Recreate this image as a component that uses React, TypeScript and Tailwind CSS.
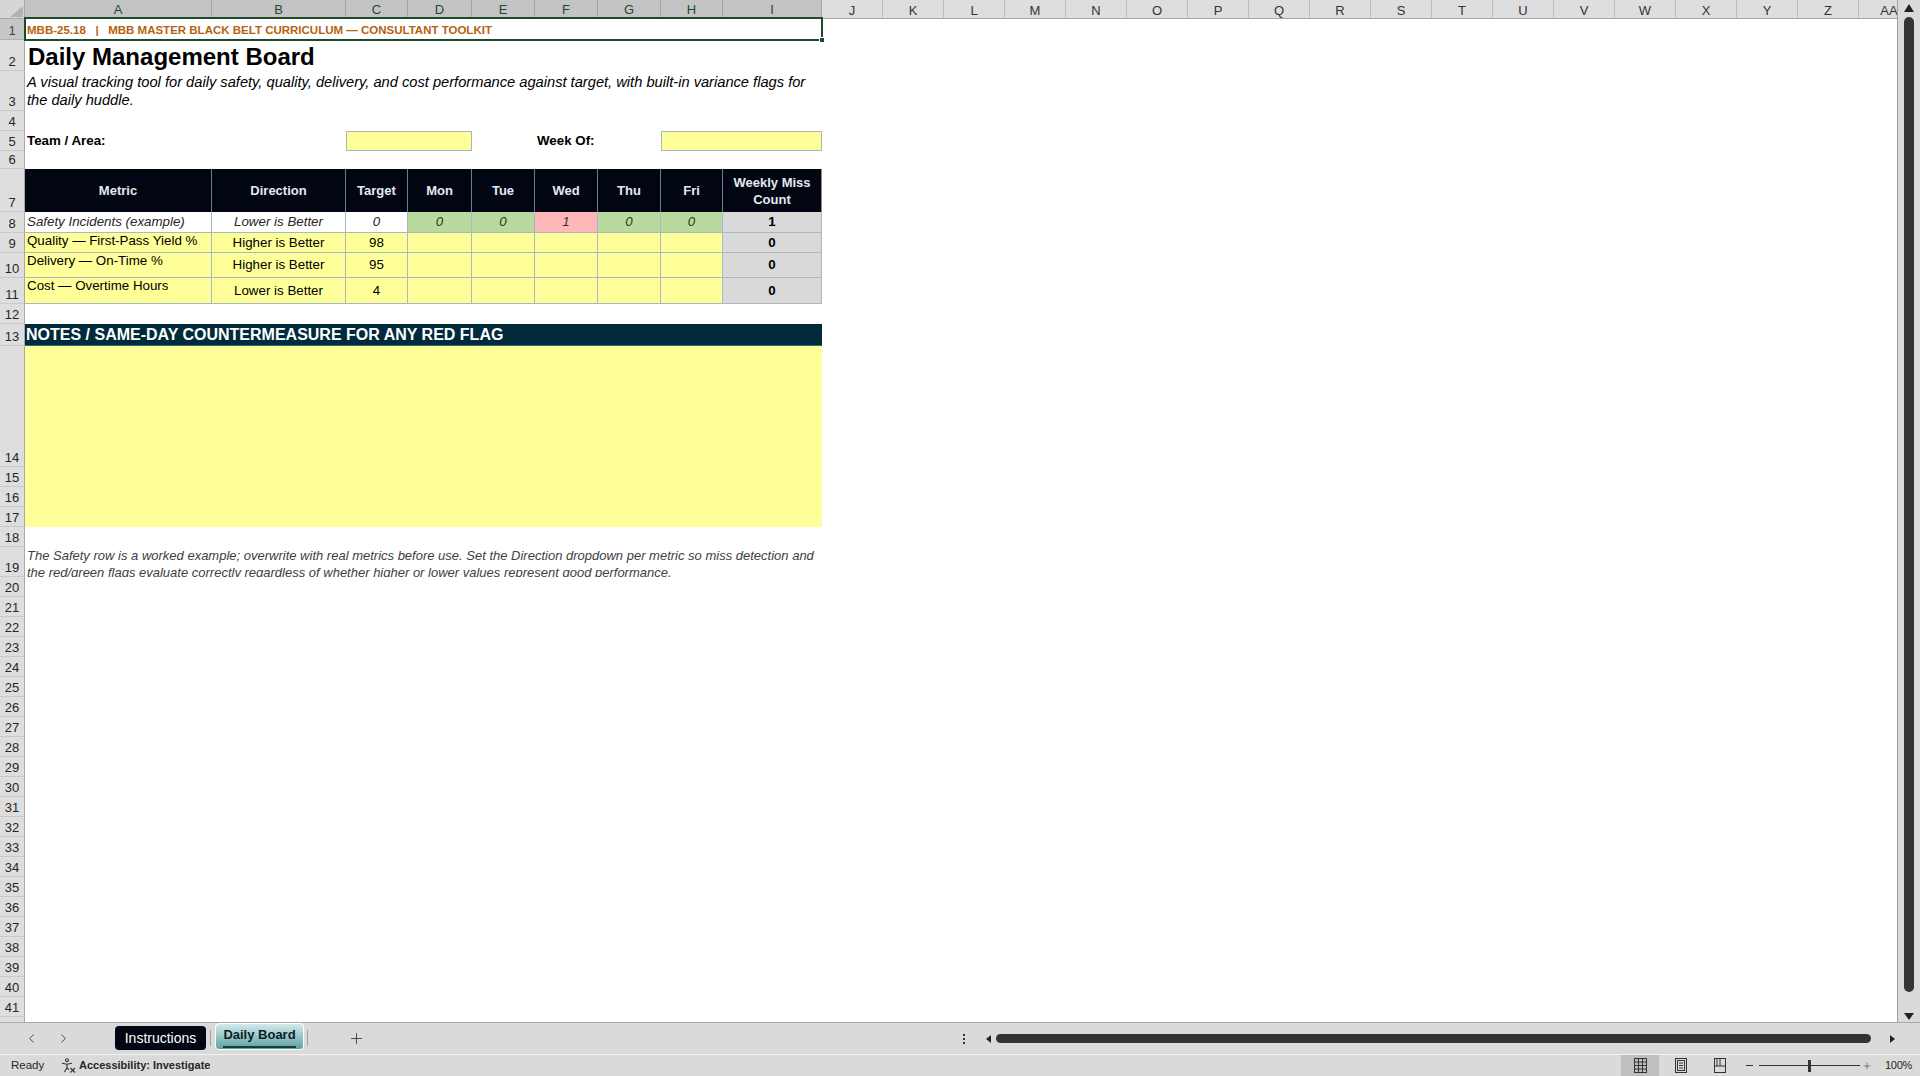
import React from "react";
import { ChevronLeft, ChevronRight, Plus } from "lucide-react";

const FONT = "font-['Liberation_Sans',Arial,sans-serif]";
const TB = "border-r border-b border-[#a7b9c4]";

function RowHead({ n, sel, h = "" }: { n: number; sel?: boolean; h?: string }) {
  return (
    <div
      className={`w-[25px] shrink-0 ${h} flex items-end justify-center pb-[1px] border-r border-b text-[13px] leading-[15px] ${
        sel
          ? "bg-[#c6c6c6] text-[#1e5631] border-r-[#1e4a2c] border-b-[#b0b0b0]"
          : "bg-[#dedede] text-[#262626] border-r-[#a8a8a8] border-b-[#c9c9c9]"
      }`}
    >
      {n}
    </div>
  );
}

function Row({ n, h, sel, children }: { n: number; h: string; sel?: boolean; children?: React.ReactNode }) {
  return (
    <div className={`flex shrink-0 ${h}`}>
      <RowHead n={n} sel={sel} />
      <div className="w-[797px] shrink-0 flex relative">{children}</div>
      <div className="flex-1 bg-white" />
    </div>
  );
}

const selCols: [string, string][] = [
  ["A", "w-[187px]"],
  ["B", "w-[134px]"],
  ["C", "w-[62px]"],
  ["D", "w-[64px]"],
  ["E", "w-[63px]"],
  ["F", "w-[63px]"],
  ["G", "w-[63px]"],
  ["H", "w-[62px]"],
  ["I", "w-[99px]"],
];
const restCols = ["J", "K", "L", "M", "N", "O", "P", "Q", "R", "S", "T", "U", "V", "W", "X", "Y", "Z", "AA"];
const dayW = ["w-[64px]", "w-[63px]", "w-[63px]", "w-[63px]", "w-[62px]"];

const metricRows = [
  { n: 9, h: "h-[20px]", m: "Quality — First-Pass Yield %", d: "Higher is Better", t: "98" },
  { n: 10, h: "h-[25px]", m: "Delivery — On-Time %", d: "Higher is Better", t: "95" },
  { n: 11, h: "h-[26px]", m: "Cost — Overtime Hours", d: "Lower is Better", t: "4" },
];

const safetyDays = [
  { v: "0", bg: "bg-[#b8da9f]" },
  { v: "0", bg: "bg-[#b8da9f]" },
  { v: "1", bg: "bg-[#ffb7b7]" },
  { v: "0", bg: "bg-[#b8da9f]" },
  { v: "0", bg: "bg-[#b8da9f]" },
];

function AccessIcon() {
  return (
    <svg width="15" height="15" viewBox="0 0 15 15" fill="none" stroke="#333" strokeWidth="1.1">
      <circle cx="6" cy="2.2" r="1.5" />
      <path d="M1 5.2 L6 6.2 L11 5.2" />
      <path d="M6 6.2 L6 9.5 L3.5 14" />
      <path d="M6 9.5 L8 12" />
      <path d="M9.5 10 L14 14.5 M14 10 L9.5 14.5" />
    </svg>
  );
}

function NormalIcon() {
  return (
    <svg width="13" height="15" viewBox="0 0 13 15" fill="none" stroke="#333" strokeWidth="1">
      <rect x="0.5" y="0.5" width="12" height="14" />
      <path d="M4.5 0.5 V14.5 M8.5 0.5 V14.5 M0.5 4 H12.5 M0.5 7.5 H12.5 M0.5 11 H12.5" />
    </svg>
  );
}

function PageIcon() {
  return (
    <svg width="12" height="15" viewBox="0 0 12 15" fill="none" stroke="#333" strokeWidth="1">
      <rect x="0.5" y="0.5" width="11" height="14" />
      <rect x="2.5" y="2.5" width="7" height="10" />
      <path d="M4 5 H8 M4 7.5 H8 M4 10 H8" />
    </svg>
  );
}

function BreakIcon() {
  return (
    <svg width="12" height="15" viewBox="0 0 12 15" fill="none" stroke="#333" strokeWidth="1">
      <rect x="0.5" y="0.5" width="11" height="14" />
      <path d="M6 0.5 V8 M0.5 8 H11.5 M3 0.5 V8" />
    </svg>
  );
}

export default function App() {
  return (
    <div className={`w-[1920px] h-[1076px] overflow-hidden flex flex-col bg-white ${FONT} text-[#1a1a1a]`}>
      {/* sheet + vertical scrollbar */}
      <div className="h-[1022px] shrink-0 flex">
        <div className="flex-1 min-w-0 overflow-hidden flex flex-col border-r border-[#a0a0a0]">
          {/* column headers */}
          <div className="flex h-[19px] shrink-0">
            <div className="w-[25px] shrink-0 bg-[#d6d6d6] border-r border-b border-[#a8a8a8] flex items-end justify-end pr-[1px] pb-[1px]">
              <svg width="13" height="11" viewBox="0 0 13 11">
                <polygon points="13,0 13,11 0,11" fill="#b3b3b3" />
              </svg>
            </div>
            {selCols.map(([l, w]) => (
              <div
                key={l}
                className={`${w} shrink-0 bg-[#c4c4c4] border-r border-r-[#a5a5a5] border-b-2 border-b-[#1e4a2c] flex items-center justify-center pt-[2px] text-[13px] leading-none text-[#1d4a2e]`}
              >
                {l}
              </div>
            ))}
            {restCols.map((l) => (
              <div
                key={l}
                className="w-[61px] shrink-0 bg-[#dedede] border-r border-b border-r-[#bdbdbd] border-b-[#a8a8a8] flex items-center justify-center pt-[2px] text-[13px] leading-none text-[#333]"
              >
                {l}
              </div>
            ))}
          </div>

          {/* row 1 */}
          <Row n={1} h="h-[21px]" sel>
            <div className="w-[797px] flex items-center pl-[2px] pt-[2px] text-[11.5px] font-bold text-[#b4620f] whitespace-pre">
              {"MBB-25.18   |   MBB MASTER BLACK BELT CURRICULUM — CONSULTANT TOOLKIT"}
            </div>
            <div className="absolute -left-[1px] -top-[2px] -right-[1px] -bottom-[1px] border-2 border-[#1e4a2c] pointer-events-none" />
            <div className="absolute -right-[3px] -bottom-[3px] w-[6px] h-[6px] bg-[#1e4a2c] border border-white" />
          </Row>

          {/* row 2 */}
          <Row n={2} h="h-[31px]">
            <div className="w-[797px] flex items-end pl-[3px] pb-[1px] text-[24px] font-bold text-black leading-[27px]">
              Daily Management Board
            </div>
          </Row>

          {/* row 3 */}
          <Row n={3} h="h-[40px]">
            <div className="w-[797px] flex items-center px-[2px] text-[14.67px] italic leading-[18px] text-black">
              A visual tracking tool for daily safety, quality, delivery, and cost performance against target, with built-in variance flags for the daily huddle.
            </div>
          </Row>

          <Row n={4} h="h-[20px]" />

          {/* row 5 */}
          <Row n={5} h="h-[20px]">
            <div className="w-[187px] flex items-center pl-[2px] text-[13.33px] font-bold text-black">Team / Area:</div>
            <div className="w-[134px]" />
            <div className="w-[126px] bg-[#ffff99] border border-[#aab5bd]" />
            <div className="w-[63px]" />
            <div className="w-[63px] flex items-center pl-[2px] text-[13.33px] font-bold text-black whitespace-nowrap">Week Of:</div>
            <div className="w-[63px]" />
            <div className="w-[161px] bg-[#ffff99] border border-[#aab5bd]" />
          </Row>

          <Row n={6} h="h-[18px]" />

          {/* row 7 header */}
          <Row n={7} h="h-[43px]">
            {[
              ["w-[187px]", "Metric"],
              ["w-[134px]", "Direction"],
              ["w-[62px]", "Target"],
              ["w-[64px]", "Mon"],
              ["w-[63px]", "Tue"],
              ["w-[63px]", "Wed"],
              ["w-[63px]", "Thu"],
              ["w-[62px]", "Fri"],
            ].map(([w, t]) => (
              <div
                key={t}
                className={`${w} bg-[#020512] border-r border-[#6f7e8e] flex items-center justify-center text-[13px] font-bold text-[#e4eaf0]`}
              >
                {t}
              </div>
            ))}
            <div className="w-[99px] bg-[#020512] border-r border-[#8a8a8a] flex items-center justify-center text-center text-[13px] font-bold leading-[17px] text-[#e4eaf0] px-[4px]">
              Weekly Miss Count
            </div>
          </Row>

          {/* row 8 example */}
          <Row n={8} h="h-[21px]">
            <div className={`w-[187px] ${TB} bg-white flex items-center pl-[2px] italic text-[13.33px] text-[#262626] whitespace-nowrap`}>
              Safety Incidents (example)
            </div>
            <div className={`w-[134px] ${TB} bg-white flex items-center justify-center italic text-[13.33px] text-[#262626]`}>
              Lower is Better
            </div>
            <div className={`w-[62px] ${TB} bg-white flex items-center justify-center italic text-[13.33px] text-[#262626]`}>0</div>
            {safetyDays.map((d, i) => (
              <div key={i} className={`${dayW[i]} ${TB} ${d.bg} flex items-center justify-center italic text-[13.33px] text-[#33332a]`}>
                {d.v}
              </div>
            ))}
            <div className={`w-[99px] ${TB} bg-[#d9d9d9] flex items-center justify-center font-bold text-[13.33px] text-black`}>1</div>
          </Row>

          {/* rows 9-11 */}
          {metricRows.map((r) => (
            <Row key={r.n} n={r.n} h={r.h}>
              <div className={`w-[187px] ${TB} bg-[#ffff99] flex items-start pl-[2px] text-[13.33px] leading-[16px] text-black whitespace-nowrap`}>
                {r.m}
              </div>
              <div className={`w-[134px] ${TB} bg-[#ffff99] flex items-center justify-center text-[13.33px] text-black`}>{r.d}</div>
              <div className={`w-[62px] ${TB} bg-[#ffff99] flex items-center justify-center text-[13.33px] text-black`}>{r.t}</div>
              {dayW.map((w, i) => (
                <div key={i} className={`${w} ${TB} bg-[#ffff99]`} />
              ))}
              <div className={`w-[99px] ${TB} bg-[#d9d9d9] flex items-center justify-center font-bold text-[13.33px] text-black`}>0</div>
            </Row>
          ))}

          <Row n={12} h="h-[20px]" />

          {/* row 13 notes header */}
          <Row n={13} h="h-[22px]">
            <div className="w-[797px] bg-[#012a3b] border-b border-[#2c6a78] flex items-center pl-[1px] text-[16px] font-bold text-white whitespace-nowrap">
              NOTES / SAME-DAY COUNTERMEASURE FOR ANY RED FLAG
            </div>
          </Row>

          {/* rows 14-17 merged notes */}
          <div className="flex shrink-0 h-[181px]">
            <div className="w-[25px] shrink-0 flex flex-col">
              <RowHead n={14} h="h-[121px]" />
              <RowHead n={15} h="h-[20px]" />
              <RowHead n={16} h="h-[20px]" />
              <RowHead n={17} h="h-[20px]" />
            </div>
            <div className="w-[797px] shrink-0 bg-[#ffff99]" />
            <div className="flex-1 bg-white" />
          </div>

          <Row n={18} h="h-[20px]" />

          {/* row 19 note */}
          <Row n={19} h="h-[30px]">
            <div className="w-[797px] overflow-hidden px-[2px] italic text-[13px] leading-[17px] text-[#404040]">
              The Safety row is a worked example; overwrite with real metrics before use. Set the Direction dropdown per metric so miss detection and the red/green flags evaluate correctly regardless of whether higher or lower values represent good performance.
            </div>
          </Row>

          {Array.from({ length: 22 }, (_, i) => i + 20).map((n) => (
            <Row key={n} n={n} h="h-[20px]" />
          ))}
          <div className="flex-1 flex">
            <div className="w-[25px] shrink-0 bg-[#dedede] border-r border-[#a8a8a8]" />
            <div className="flex-1 bg-white" />
          </div>
        </div>

        {/* vertical scrollbar */}
        <div className="w-[22px] shrink-0 bg-[#dadada] flex flex-col items-center">
          <div className="h-[4px] shrink-0" />
          <svg width="10" height="8" viewBox="0 0 10 8" className="shrink-0">
            <polygon points="5,0 10,8 0,8" fill="#222" />
          </svg>
          <div className="h-[5px] shrink-0" />
          <div className="w-[10px] h-[975px] shrink-0 rounded-full bg-[#333333]" />
          <div className="h-[21px] shrink-0" />
          <svg width="10" height="7" viewBox="0 0 10 7" className="shrink-0">
            <polygon points="0,0 10,0 5,7" fill="#222" />
          </svg>
        </div>
      </div>

      {/* sheet tab bar */}
      <div className="h-[32px] shrink-0 flex items-start bg-[#dadada] border-t border-[#a9a9a9]">
        <div className="w-[22px] shrink-0" />
        <div className="w-[18px] h-[31px] shrink-0 flex items-center justify-center text-[#3a3a3a]">
          <ChevronLeft size={15} strokeWidth={1.4} />
        </div>
        <div className="w-[14px] shrink-0" />
        <div className="w-[18px] h-[31px] shrink-0 flex items-center justify-center text-[#3a3a3a]">
          <ChevronRight size={15} strokeWidth={1.4} />
        </div>
        <div className="w-[43px] shrink-0" />
        <div className="w-[91px] h-[24px] mt-[3px] shrink-0 rounded-[4px] bg-[#020512] flex items-center justify-center text-[14px] text-white">
          Instructions
        </div>
        <div className="w-[4px] shrink-0" />
        <div className="w-[1px] h-[16px] mt-[7px] shrink-0 bg-[#a0a0a0]" />
        <div className="w-[4px] shrink-0" />
        <div className="w-[89px] h-[27px] shrink-0 rounded-[4px] border border-white bg-gradient-to-b from-[#d2ebeb] to-[#5c9f9f] flex flex-col items-center justify-start pt-[2px]">
          <div className="text-[13px] font-bold leading-[17px] text-[#0c1e28]">Daily Board</div>
          <div className="w-[73px] h-[2px] mt-[3px] bg-[#173f33]" />
        </div>
        <div className="w-[3px] shrink-0" />
        <div className="w-[1px] h-[16px] mt-[7px] shrink-0 bg-[#a0a0a0]" />
        <div className="w-[38px] shrink-0" />
        <div className="w-[20px] h-[31px] shrink-0 flex items-center justify-center text-[#333]">
          <Plus size={17} strokeWidth={1.2} />
        </div>
        <div className="flex-1" />
        <div className="w-[962px] h-[31px] shrink-0 flex items-center">
          <div className="w-[12px] shrink-0 flex flex-col items-center gap-[2px]">
            <div className="w-[2px] h-[2px] bg-[#333]" />
            <div className="w-[2px] h-[2px] bg-[#333]" />
            <div className="w-[2px] h-[2px] bg-[#333]" />
          </div>
          <div className="w-[14px] shrink-0" />
          <div className="w-[8px] shrink-0 flex justify-center">
            <svg width="5" height="8" viewBox="0 0 5 8">
              <polygon points="5,0 5,8 0,4" fill="#222" />
            </svg>
          </div>
          <div className="w-[4px] shrink-0" />
          <div className="w-[875px] h-[9px] shrink-0 rounded-full bg-[#333333]" />
          <div className="w-[17px] shrink-0" />
          <div className="w-[8px] shrink-0 flex justify-center">
            <svg width="5" height="8" viewBox="0 0 5 8">
              <polygon points="0,0 5,4 0,8" fill="#222" />
            </svg>
          </div>
          <div className="w-[24px] shrink-0" />
        </div>
      </div>

      {/* status bar */}
      <div className="h-[22px] shrink-0 flex items-center bg-[#dadada] border-t border-[#f2f2f2] text-[#262626]">
        <div className="w-[11px] shrink-0" />
        <div className="w-[30px] shrink-0 text-[11.5px] leading-none">Ready</div>
        <div className="w-[20px] shrink-0" />
        <div className="w-[15px] h-[15px] shrink-0">
          <AccessIcon />
        </div>
        <div className="w-[3px] shrink-0" />
        <div className="text-[11px] font-bold leading-none whitespace-nowrap">Accessibility: Investigate</div>
        <div className="flex-1" />
        <div className="w-[299px] h-full shrink-0 flex items-center">
          <div className="w-[38px] h-full shrink-0 bg-[#bfbfbf] flex items-center justify-center">
            <NormalIcon />
          </div>
          <div className="w-[44px] shrink-0 flex justify-center">
            <PageIcon />
          </div>
          <div className="w-[34px] shrink-0 flex justify-center">
            <BreakIcon />
          </div>
          <div className="w-[7px] shrink-0" />
          <div className="w-[10px] shrink-0 flex justify-center">
            <div className="w-[7px] h-[1px] bg-[#333]" />
          </div>
          <div className="w-[5px] shrink-0" />
          <div className="w-[101px] shrink-0 flex items-center">
            <div className="w-[49px] h-[1px] bg-[#333]" />
            <div className="w-[3px] h-[12px] bg-[#333]" />
            <div className="w-[49px] h-[1px] bg-[#333]" />
          </div>
          <div className="w-[2px] shrink-0" />
          <div className="w-[10px] shrink-0 flex justify-center text-[#333]">
            <Plus size={10} strokeWidth={1.3} />
          </div>
          <div className="w-[13px] shrink-0" />
          <div className="w-[28px] shrink-0 text-[11px] leading-none whitespace-nowrap tracking-[-0.3px]">100%</div>
          <div className="w-[7px] shrink-0" />
        </div>
      </div>
    </div>
  );
}
